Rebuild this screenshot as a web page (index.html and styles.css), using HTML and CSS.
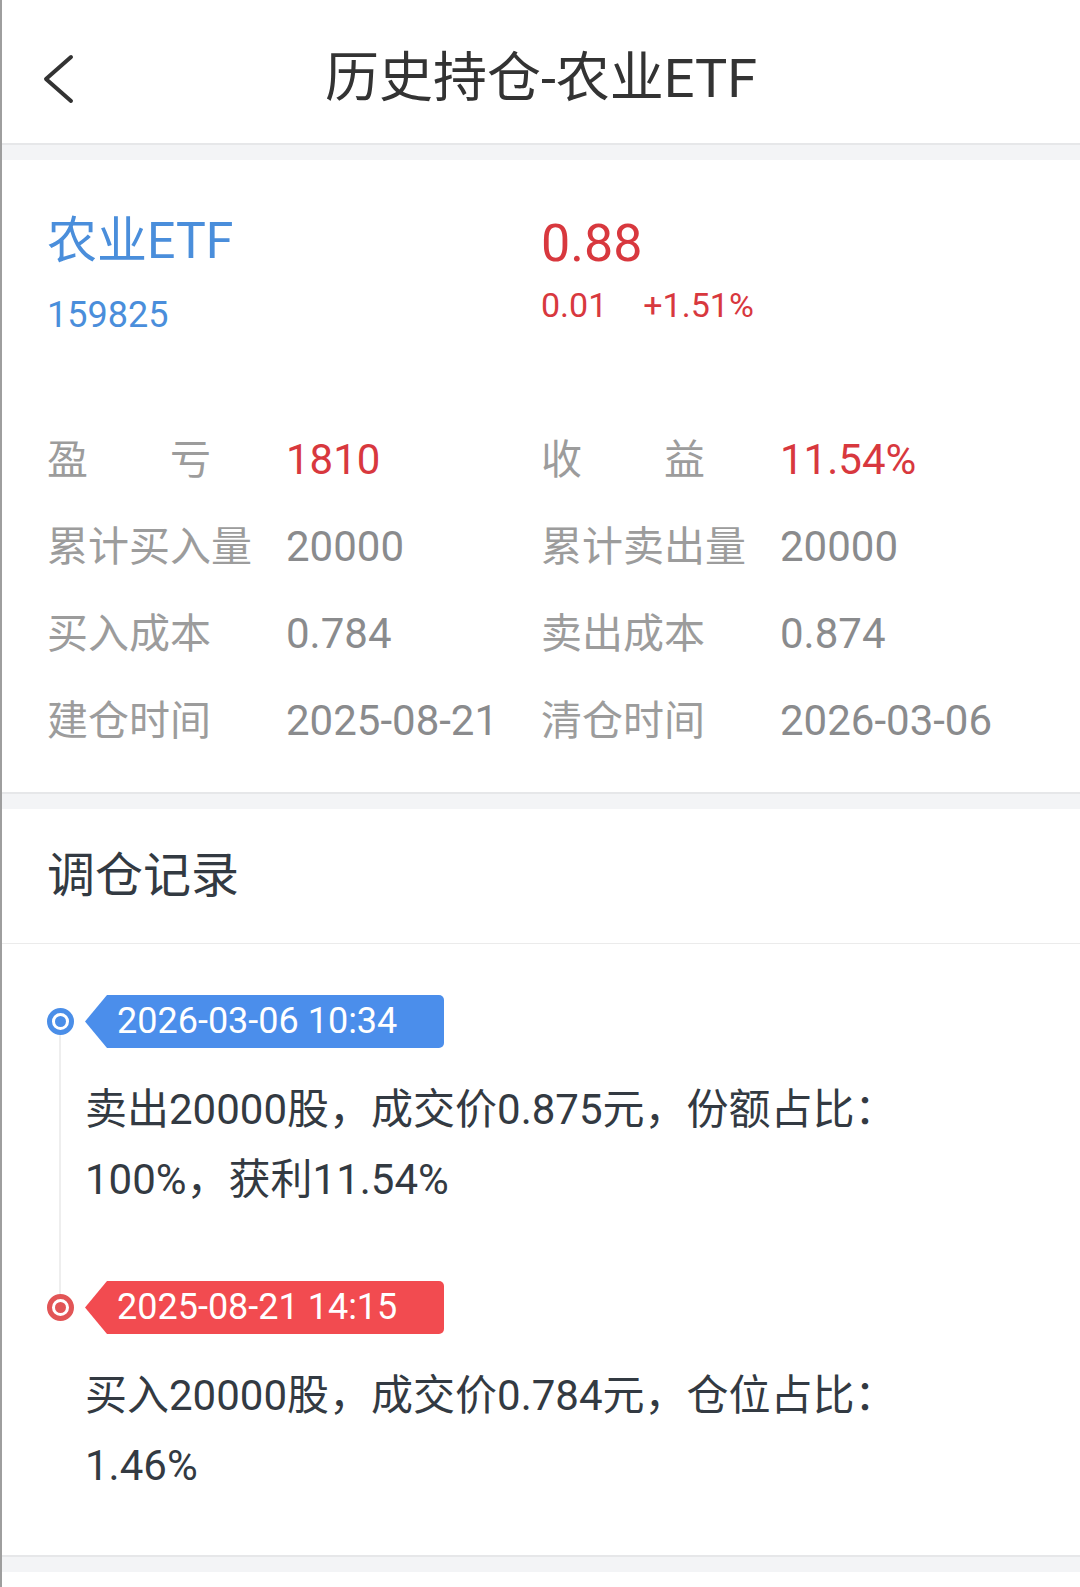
FILE: index.html
```html
<html lang="zh-CN">
<head>
<meta charset="utf-8">
<title>历史持仓-农业ETF</title>
<link rel="stylesheet" href="styles.css">
</head>
<body>
  <div class="page">
    <header class="topbar">
      <svg class="back" width="32" height="50" viewBox="0 0 32 50">
        <path d="M29 3 L4 25 L29 47" fill="none" stroke="#333" stroke-width="4" stroke-linecap="round" stroke-linejoin="round"/>
      </svg>
      <h1 class="title">历史持仓-农业ETF</h1>
      <span></span>
    </header>
    <div class="gap"></div>

    <section class="summary">
      <div class="quote">
        <div class="fund">
          <div class="fund-name">农业ETF</div>
          <div class="fund-code">159825</div>
        </div>
        <div class="price">
          <div class="price-now">0.88</div>
          <div class="price-change"><span>0.01</span><span>+1.51%</span></div>
        </div>
      </div>

      <div class="stats">
        <div class="stat"><span class="label">盈　　亏</span><span class="value up">1810</span></div>
        <div class="stat"><span class="label">收　　益</span><span class="value up">11.54%</span></div>
        <div class="stat"><span class="label">累计买入量</span><span class="value">20000</span></div>
        <div class="stat"><span class="label">累计卖出量</span><span class="value">20000</span></div>
        <div class="stat"><span class="label">买入成本</span><span class="value">0.784</span></div>
        <div class="stat"><span class="label">卖出成本</span><span class="value">0.874</span></div>
        <div class="stat"><span class="label">建仓时间</span><span class="value">2025-08-21</span></div>
        <div class="stat"><span class="label">清仓时间</span><span class="value">2026-03-06</span></div>
      </div>
    </section>
    <div class="gap"></div>

    <section class="records">
      <h2 class="records-title">调仓记录</h2>
      <ul class="timeline">
        <li class="record sell">
          <div class="record-head">
            <span class="dot"></span>
            <span class="tag">2026-03-06 10:34</span>
          </div>
          <p class="note">卖出20000股，成交价0.875元，份额占比：100%，获利11.54%</p>
        </li>
        <li class="record buy">
          <div class="record-head">
            <span class="dot"></span>
            <span class="tag">2025-08-21 14:15</span>
          </div>
          <p class="note">买入20000股，成交价0.784元，仓位占比：1.46%</p>
        </li>
      </ul>
    </section>
    <div class="gap"></div>
  </div>
</body>
</html>
```

FILE: styles.css
```css
body {
  margin: 0;
  background: #fff;
  font-family: Roboto, "Noto Sans CJK SC", sans-serif;
}

.page {
  min-height: 100vh;
  border-left: 2px solid #9e9e9e;
}

/* top bar */
.topbar {
  height: 143px;
  box-sizing: border-box;
  padding-top: 14px;
  display: grid;
  grid-template-columns: 1fr auto 1fr;
  align-items: center;
}
.back {
  margin-left: 40px;
  display: block;
}
.title {
  margin: 0;
  font-size: 54px;
  font-weight: normal;
  color: #333;
  line-height: 64px;
}

.gap {
  height: 15px;
  border-top: 2px solid #e6e7e9;
  background: #f3f4f6;
}

/* summary */
.summary {
  padding: 51px 0 28px 45px;
}
.quote {
  display: grid;
  grid-template-columns: 494px 1fr;
}
.fund-name {
  font-size: 50px;
  line-height: 60px;
  color: #4a8edb;
}
.fund-code {
  margin-top: 22px;
  font-size: 36px;
  line-height: 44px;
  color: #4a8edb;
}
.price-now {
  margin-top: 3px;
  font-size: 52px;
  line-height: 60px;
  color: #d8383e;
}
.price-change {
  margin-top: 11px;
  font-size: 34px;
  line-height: 40px;
  color: #d8383e;
  display: flex;
  gap: 36px;
}

.stats {
  margin-top: 79px;
  display: grid;
  grid-template-columns: 494px 1fr;
  grid-auto-rows: 87px;
}
.stat {
  display: flex;
  align-items: center;
}
.label {
  width: 239px;
  margin-top: -7px;
  font-size: 41px;
  color: #9c9c9c;
}
.value {
  font-size: 42px;
  color: #8a8b8d;
}
.value.up {
  color: #d8383e;
}

/* records */
.records-title {
  margin: 0;
  height: 134px;
  line-height: 134px;
  padding-left: 45px;
  font-size: 48px;
  font-weight: normal;
  color: #333a42;
  border-bottom: 1px solid #ebebeb;
}
.timeline {
  list-style: none;
  margin: 0;
  padding: 51px 0 54px 0;
}
.record {
  position: relative;
}
.record + .record {
  margin-top: 66px;
}
.record:not(:last-child)::before {
  content: "";
  position: absolute;
  left: 57px;
  width: 2px;
  top: 26px;
  bottom: -93px;
  background: #eeeeee;
}
.record-head {
  display: flex;
  align-items: center;
  gap: 11px;
  padding-left: 45px;
}
.dot {
  position: relative;
  z-index: 1;
  width: 27px;
  height: 27px;
  box-sizing: border-box;
  border-radius: 50%;
  border: 5px solid;
  background: #fff;
  display: grid;
  place-items: center;
}
.dot::after {
  content: "";
  width: 11px;
  height: 11px;
  border-radius: 50%;
  background: currentColor;
}
.tag {
  height: 53px;
  line-height: 53px;
  padding: 0 47px 0 32px;
  font-size: 36px;
  color: #fff;
  border-radius: 0 5px 5px 0;
  clip-path: polygon(22px 0, 100% 0, 100% 100%, 22px 100%, 0 50%);
}
.sell .dot { color: #4a8ee8; border-color: #4a8ee8; }
.sell .tag { background: #4b8eeb; }
.buy .dot { color: #e25556; border-color: #e25556; }
.buy .tag { background: #f24b50; }

.note {
  margin: 27px 0 0 83px;
  max-width: 840px;
  font-size: 42px;
  line-height: 70px;
  color: #333a42;
}
```
